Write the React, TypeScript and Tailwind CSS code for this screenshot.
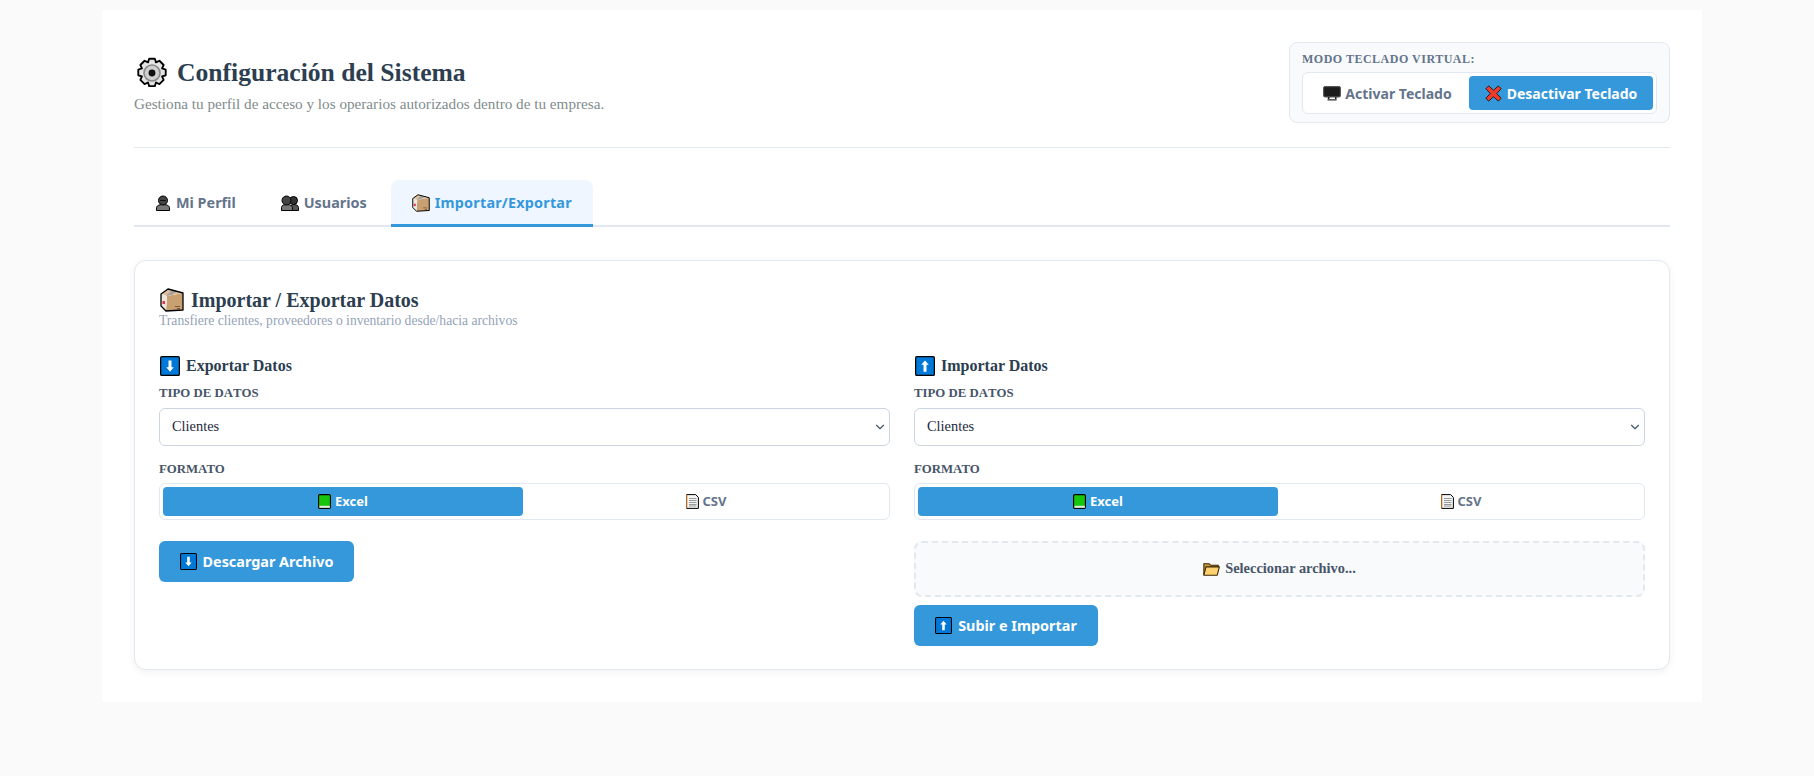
import React from 'react';
import { ChevronDown } from 'lucide-react';

const Gear = ({ className }: { className: string }) => (
  <svg viewBox="0 0 28 28" className={className}>
    <path
      d="M11.5 1.5h5l1 3.2 3-1.4 3.7 3.7-1.4 3 3.2 1v5l-3.2 1 1.4 3-3.7 3.7-3-1.4-1 3.2h-5l-1-3.2-3 1.4-3.7-3.7 1.4-3-3.2-1v-5l3.2-1-1.4-3 3.7-3.7 3 1.4z"
      fill="#e4e4e4"
      stroke="#000"
      strokeWidth="1.6"
      strokeLinejoin="round"
    />
    <circle cx="14" cy="14" r="7" fill="#d0d0d0" stroke="#8a8a8a" strokeWidth="1.4" />
    <circle cx="14" cy="14" r="3" fill="#111" />
  </svg>
);

const Person = ({ className }: { className: string }) => (
  <svg viewBox="0 0 16 16" className={className}>
    <path d="M1.5 15.5v-2.5c0-2 2-3.5 6.5-3.5s6.5 1.5 6.5 3.5v2.5z" fill="#777" stroke="#000" />
    <circle cx="8" cy="5.5" r="4.5" fill="#444" stroke="#000" />
    <path d="M5 5.5h6" stroke="#111" />
  </svg>
);

const People = ({ className }: { className: string }) => (
  <svg viewBox="0 0 18 16" className={className}>
    <path d="M9 15.5v-3c0-2 2-3 4-3s4.500 1 4.500 3v3z" fill="#555" stroke="#000" />
    <path d="M.5 15.5v-3c0-2 2-3 5-3s6 1 6 3v3z" fill="#777" stroke="#000" />
    <circle cx="12.500" cy="5.500" r="4" fill="#333" stroke="#000" />
    <circle cx="5.500" cy="5.500" r="4.500" fill="#444" stroke="#000" />
  </svg>
);

const Box = ({ className }: { className: string }) => (
  <svg viewBox="0 0 24 24" className={className}>
    <path d="M7 8 23 5v17L6 23z" fill="#c9a071" />
    <path d="M1 6 8 1l15 4-16 3z" fill="#dcc1a0" />
    <path d="M1 6 7 8 6 23l-5-5z" fill="#ece6df" />
    <path d="M12 2.200 17 3.500 11.500 7 6 8z" fill="#a9a29a" />
    <rect x="2.500" y="13" width="2.500" height="3" fill="#e0304a" />
    <rect x="15" y="18" width="5" height="1" fill="#7a5a3c" />
    <rect x="17" y="20" width="3" height="1" fill="#7a5a3c" />
    <path d="M1 6 8 1l15 4v17L6 23l-5-5z" fill="none" stroke="#000" strokeWidth="1.300" strokeLinejoin="round" />
  </svg>
);

const ArrowBox = ({ className, up }: { className: string; up?: boolean }) => (
  <svg viewBox="0 0 16 16" className={className}>
    <rect x="0.500" y="0.500" width="15" height="15" rx="1" fill="#0078d7" stroke="#000" />
    {up ? (
      <path d="M8 3.500 11 7H9.200v5.500H6.800V7H5z" fill="#fff" />
    ) : (
      <path d="M8 12.500 11 9H9.200V3.500H6.800V9H5z" fill="#fff" />
    )}
  </svg>
);

const Monitor = ({ className }: { className: string }) => (
  <svg viewBox="0 0 18 16" className={className}>
    <rect x="0.500" y="1.500" width="17" height="10.500" rx="1.500" fill="#333" stroke="#555" />
    <rect x="1.500" y="2.500" width="15" height="8.500" fill="#1c1c1c" />
    <path d="M5 12h1.500v2H12v-2h1.500v3.500H4.500z" fill="#222" />
    <rect x="5" y="14.500" width="8" height="1" fill="#999" />
  </svg>
);

const CrossMark = ({ className }: { className: string }) => (
  <svg viewBox="0 0 16 16" className={className}>
    <path
      d="M3.500.8 8 5l4.500-4.200 2.700 2.700L11 8l4.200 4.500-2.700 2.700L8 11l-4.500 4.200-2.700-2.700L5 8 .8 3.500z"
      fill="#f03a2a"
      stroke="#111"
      strokeWidth="0.800"
      strokeLinejoin="round"
    />
  </svg>
);

const GreenBook = ({ className }: { className: string }) => (
  <svg viewBox="0 0 13 15" className={className}>
    <rect x="0.600" y="0.600" width="11.800" height="13.800" rx="1.200" fill="#16c60c" stroke="#000" strokeWidth="1.100" />
    <rect x="1.500" y="11.800" width="10.400" height="2" fill="#e8e8e8" />
  </svg>
);

const Doc = ({ className }: { className: string }) => (
  <svg viewBox="0 0 13 15" className={className}>
    <path d="M.6.6h9l2.800 2.800v11H.6z" fill="#f4f4f4" stroke="#000" strokeWidth="1" />
    <path d="M.6.600v13.800" stroke="#c9701a" strokeWidth="1" />
    <path d="M3 4.500h7.500M3 6.500h7.500M3 8.500h7.500M3 10.500h7.500M3 12h7.500" stroke="#9a9a9a" strokeWidth="1" />
  </svg>
);

const Folder = ({ className }: { className: string }) => (
  <svg viewBox="0 0 16 13" className={className}>
    <path d="M.8 11.800V1.500h5l1.500 1.500h7v2" fill="#c99a3c" stroke="#3a2400" />
    <path d="M2.800 4.500h12.600l-2 7.800H.8z" fill="#fcd271" stroke="#3a2400" strokeLinejoin="round" />
  </svg>
);

const FormatPicker = () => (
  <div className="flex h-[37px] gap-[3px] rounded-md border border-[#e2e8f0] bg-white p-[3px]">
    <button className="flex flex-1 items-center justify-center gap-1 rounded bg-[#3498db] text-[13px] font-bold text-white font-['Noto_Sans',sans-serif]">
      <GreenBook className="h-[15px] w-[13px]" />
      Excel
    </button>
    <button className="flex flex-1 items-center justify-center gap-1 rounded text-[13px] font-bold text-[#64748b] font-['Noto_Sans',sans-serif]">
      <Doc className="h-[15px] w-[13px]" />
      CSV
    </button>
  </div>
);

const TypeSelect = () => (
  <div>
    <label className="mb-[7px] block text-[12.8px] leading-[15px] font-bold text-[#475569] [font-kerning:none]">TIPO DE DATOS</label>
    <div className="relative">
      <select className="h-[38px] w-full appearance-none rounded-md border border-[#cbd5e1] bg-white px-3 text-[14.4px] text-[#1e293b] font-['Liberation_Serif',serif]">
        <option>Clientes</option>
        <option>Proveedores</option>
        <option>Inventario</option>
      </select>
      <ChevronDown className="pointer-events-none absolute top-[12px] right-[3px] h-[14px] w-[14px] text-[#475569]" strokeWidth={2} />
    </div>
  </div>
);

const App = () => {
  const tabClass =
    "flex h-[45px] items-center gap-[5px] px-[21px] text-[14.4px] font-bold text-[#64748b] font-['Noto_Sans',sans-serif]";

  return (
    <div className="min-h-[776px] bg-[#fafafa] pt-[10px] pl-[102px] font-['Liberation_Serif',serif]">
      <div className="h-[692px] w-[1600px] bg-white px-8 pt-8">
        {/* encabezado */}
        <div className="flex h-[106px] items-start justify-between border-b border-[#e2e8f0]">
          <div>
            <h1 className="mt-[15px] flex items-center gap-[9px] text-[25.6px] leading-[30px] font-bold text-[#2c3e50]">
              <Gear className="ml-[2px] h-[32px] w-[32px]" />
              Configuración del Sistema
            </h1>
            <p className="mt-[6px] text-[15.2px] leading-[17px] text-[#7f8c8d]">
              Gestiona tu perfil de acceso y los operarios autorizados dentro de tu empresa.
            </p>
          </div>
          <div className="h-[81px] w-[381px] rounded-lg border border-[#e2e8f0] bg-[#f8fafc] px-3 pt-[9px]">
            <div className="text-[12px] leading-[14px] font-bold tracking-[0.5px] text-[#64748b]">
              MODO TECLADO VIRTUAL:
            </div>
            <div className="mt-[6px] flex h-[42px] w-[355px] rounded-md border border-[#e2e8f0] bg-white p-[3px]">
              <button className="flex flex-1 items-center justify-center gap-1 text-[14px] font-bold text-[#64748b] font-['Noto_Sans',sans-serif]">
                <Monitor className="h-[16px] w-[18px]" />
                Activar Teclado
              </button>
              <button className="flex h-[34px] w-[184px] items-center justify-center gap-[5px] rounded bg-[#3498db] text-[14px] font-bold text-white font-['Noto_Sans',sans-serif]">
                <CrossMark className="h-[17px] w-[17px]" />
                Desactivar Teclado
              </button>
            </div>
          </div>
        </div>

        {/* pestañas */}
        <div className="mt-8 flex h-[47px] gap-[3px] border-b-2 border-[#e2e8f0]">
          <button className={tabClass}>
            <Person className="h-[16px] w-[16px]" />
            Mi Perfil
          </button>
          <button className={tabClass}>
            <People className="h-[16px] w-[18px]" />
            Usuarios
          </button>
          <button className="flex h-[47px] items-center gap-[5px] rounded-t-lg border-b-[3px] border-[#3498db] bg-[#eff6ff] px-[21px] pt-[1px] text-[14.4px] font-bold tracking-[0.2px] text-[#3498db] font-['Noto_Sans',sans-serif]">
            <Box className="h-[18px] w-[18px]" />
            Importar/Exportar
          </button>
        </div>

        {/* tarjeta */}
        <div className="mt-[33px] h-[410px] rounded-xl border border-[#e2e8f0] bg-white px-6 pt-[27px] shadow-[0_2px_8px_rgba(0,0,0,0.06)]">
          <h2 className="flex items-center gap-[7px] text-[20px] leading-[24px] font-bold text-[#2c3e50]">
            <Box className="ml-[1px] h-[24px] w-[24px]" />
            Importar / Exportar Datos
          </h2>
          <p className="mt-[1px] text-[13.6px] leading-[15px] text-[#94a3b8]">
            Transfiere clientes, proveedores o inventario desde/hacia archivos
          </p>

          <div className="mt-[28px] grid grid-cols-2 gap-6">
            <div>
              <h3 className="mb-[10px] flex h-[20px] items-center gap-[6px] text-[16px] font-bold text-[#2c3e50]">
                <ArrowBox className="ml-[1px] h-[20px] w-[20px]" />
                Exportar Datos
              </h3>
              <TypeSelect />
              <label className="mt-[16px] mb-[6px] block text-[12.8px] leading-[15px] font-bold text-[#475569]">FORMATO</label>
              <FormatPicker />
              <button className="mt-[21px] flex h-[41px] w-[195px] items-center justify-center gap-[6px] rounded-md bg-[#3498db] text-[14.4px] font-bold text-white font-['Noto_Sans',sans-serif]">
                <ArrowBox className="h-[17px] w-[17px]" />
                Descargar Archivo
              </button>
            </div>

            <div>
              <h3 className="mb-[10px] flex h-[20px] items-center gap-[6px] text-[16px] font-bold text-[#2c3e50]">
                <ArrowBox up className="ml-[1px] h-[20px] w-[20px]" />
                Importar Datos
              </h3>
              <TypeSelect />
              <label className="mt-[16px] mb-[6px] block text-[12.8px] leading-[15px] font-bold text-[#475569]">FORMATO</label>
              <FormatPicker />
              <div className="mt-[21px] flex h-[56px] items-center justify-center gap-[5px] rounded-lg border-2 border-dashed border-[#e2e8f0] bg-[#f8fafc] text-[14.4px] font-bold text-[#475569]">
                <Folder className="h-[14px] w-[17px]" />
                Seleccionar archivo...
              </div>
              <button className="mt-2 flex h-[41px] w-[184px] items-center justify-center gap-[6px] rounded-md bg-[#3498db] text-[14.4px] font-bold text-white font-['Noto_Sans',sans-serif]">
                <ArrowBox up className="h-[17px] w-[17px]" />
                Subir e Importar
              </button>
            </div>
          </div>
        </div>
      </div>
    </div>
  );
};

export default App;
